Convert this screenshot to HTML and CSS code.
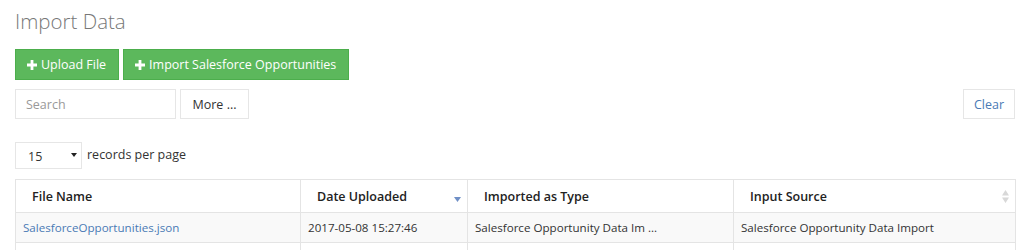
FILE: index.html
```html
<!DOCTYPE html>
<html>
<head>
<meta charset="utf-8">
<title>Import Data</title>
<link rel="stylesheet" href="styles.css">
</head>
<body>
<div class="page">
  <h1 class="title">Import Data</h1>
  <div class="actions">
    <button class="btn btn-green"><svg class="plus" viewBox="0 0 10 10" width="10" height="10"><path d="M3.6 0h2.8v3.6H10v2.8H6.4V10H3.6V6.4H0V3.6h3.6z" fill="#fff"/></svg>Upload File</button>
    <button class="btn btn-green"><svg class="plus" viewBox="0 0 10 10" width="10" height="10"><path d="M3.6 0h2.8v3.6H10v2.8H6.4V10H3.6V6.4H0V3.6h3.6z" fill="#fff"/></svg>Import Salesforce Opportunities</button>
  </div>
  <div class="filters">
    <input class="search" type="text" placeholder="Search">
    <button class="btn btn-default more">More ...</button>
    <button class="btn btn-default clear">Clear</button>
  </div>
  <div class="length">
    <div class="select"><span>15</span><svg class="caret" viewBox="0 0 6 4" width="6" height="4"><path d="M0 0h6L3 4z" fill="#222"/></svg></div>
    <span class="length-label">records per page</span>
  </div>
  <table class="grid">
    <thead>
      <tr>
        <th class="c1">File Name</th>
        <th class="c2 sorted">Date Uploaded<svg class="sort-desc" viewBox="0 0 7 5" width="7" height="5"><path d="M0 0h7L3.5 5z" fill="#6f8fc6"/></svg></th>
        <th class="c3">Imported as Type</th>
        <th class="c4 sortable">Input Source<svg class="sort-both" viewBox="0 0 7 13" width="7" height="13"><path d="M0 5.5L3.5 0 7 5.5z M0 7.5h7L3.5 13z" fill="#d8d8d8"/></svg></th>
      </tr>
    </thead>
    <tbody>
      <tr class="odd">
        <td><a href="#">SalesforceOpportunities.json</a></td>
        <td>2017-05-08 15:27:46</td>
        <td>Salesforce Opportunity Data Im ...</td>
        <td>Salesforce Opportunity Data Import</td>
      </tr>
      <tr>
        <td>&nbsp;</td>
        <td>&nbsp;</td>
        <td>&nbsp;</td>
        <td>&nbsp;</td>
      </tr>
    </tbody>
  </table>
</div>
</body>
</html>
```

FILE: styles.css
```css
* { box-sizing: border-box; }
html, body { margin: 0; padding: 0; background: #fff; }
body {
  font-family: "Open Sans", "Noto Sans", sans-serif;
  font-size: 12px;
  color: #333;
  overflow: hidden;
}
.page { padding: 0 9px 0 15px; }
.title {
  margin: 0;
  padding-top: 8px;
  height: 49px;
  font-size: 20.5px;
  font-weight: 300;
  line-height: 26px;
  color: #777;
}
.actions { display: flex; gap: 4px; height: 31px; }
.btn {
  font-family: inherit;
  font-size: 12.5px;
  border-radius: 0;
  cursor: pointer;
  display: inline-flex;
  align-items: center;
  justify-content: center;
  white-space: nowrap;
}
.btn-green {
  background: #5cb85c;
  border: 1px solid #4cae4c;
  color: #fff;
  font-weight: 400;
  padding: 0 12px 0 11px;
  height: 31px;
}
.plus { margin-right: 4px; }
.filters { display: flex; gap: 4px; margin-top: 9px; height: 30px; }
.search {
  width: 161px;
  height: 30px;
  border: 1px solid #e6e6e6;
  padding: 0 10px;
  font-family: inherit;
  font-size: 12.5px;
  color: #333;
  outline: none;
}
.search::placeholder { color: #999; }
.btn-default {
  background: #fff;
  border: 1px solid #e6e6e6;
  height: 30px;
  padding: 0 12px;
  color: #333;
}
.more { width: 69px; padding: 0; }
.clear { margin-left: auto; width: 52px; color: #4a7ab5; padding: 0; }
.length { display: flex; align-items: center; margin-top: 23px; height: 27px; font-size: 12.5px; }
.select {
  width: 67px;
  height: 27px;
  border: 1px solid #e6e6e6;
  display: flex;
  align-items: center;
  justify-content: space-between;
  padding: 2px 4px 0 12px;
  color: #333;
}
.caret { margin-top: -3px; }
.length-label { margin-left: 5px; margin-top: -2px; }
.grid {
  margin-top: 10px;
  width: 1000px;
  border-collapse: collapse;
  table-layout: fixed;
}
.grid th, .grid td { border: 1px solid #e4e4e4; text-align: left; white-space: nowrap; overflow: hidden; }
.grid th {
  height: 33px;
  padding: 0 16px;
  font-size: 12.5px;
  font-weight: 600;
  color: #222;
  position: relative;
}
.grid td { height: 30px; padding: 0 7px; color: #333; font-size: 11.6px; }
.grid tr.odd td { background: #f9f9f9; }
.grid a { color: #4a7ab5; text-decoration: none; }
.c1 { width: 285px; }
.c2 { width: 167px; }
.c3 { width: 266px; }
.c4 { width: 282px; }
.sort-desc { position: absolute; right: 6px; top: 17px; }
.sort-both { position: absolute; right: 6px; top: 10px; }
```
